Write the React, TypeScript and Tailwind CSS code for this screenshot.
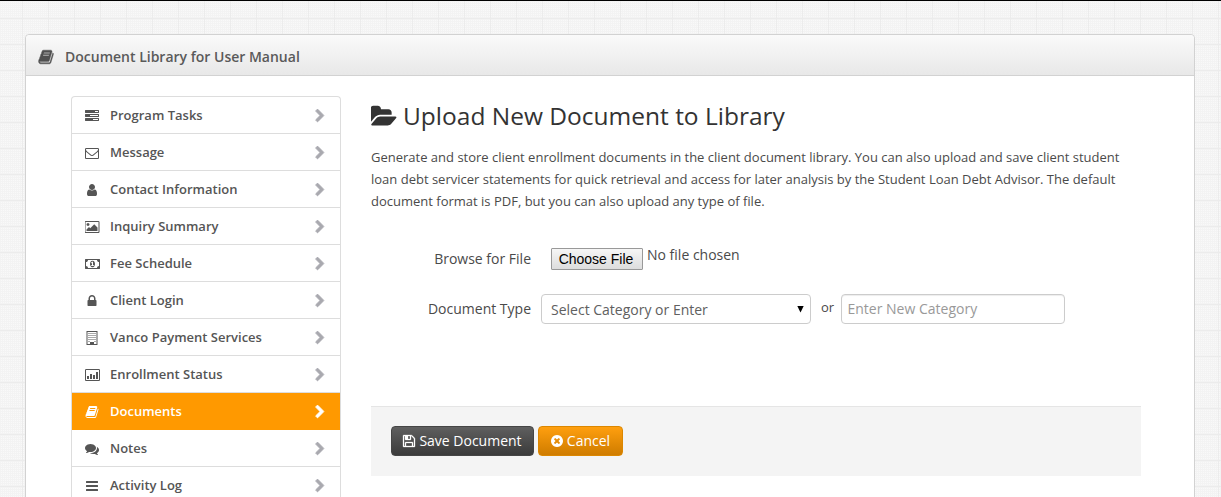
import React from "react";

const icons = {
  tasks: "M1024 1408h640v-128h-640v128zm-384-512h1024v-128h-1024v128zm640-512h384v-128h-384v128zm512 832v256q0 26-19 45t-45 19h-1664q-26 0-45-19t-19-45v-256q0-26 19-45t45-19h1664q26 0 45 19t19 45zm0-512v256q0 26-19 45t-45 19h-1664q-26 0-45-19t-19-45v-256q0-26 19-45t45-19h1664q26 0 45 19t19 45zm0-512v256q0 26-19 45t-45 19h-1664q-26 0-45-19t-19-45v-256q0-26 19-45t45-19h1664q26 0 45 19t19 45z",
  envelope: "M1664 1504v-768q-32 36-69 66-268 206-426 338-51 43-83 67t-86.5 48.5-102.5 24.5h-2q-48 0-102.5-24.5t-86.5-48.5-83-67q-158-132-426-338-37-30-69-66v768q0 13 9.5 22.5t22.5 9.5h1472q13 0 22.5-9.5t9.5-22.5zm0-1051v-24.5l-.5-13-3-12.5-5.5-9-9-7.5-14-2.5h-1472q-13 0-22.5 9.5t-9.5 22.5q0 168 147 284 193 152 401 317 6 5 35 29.5t46 37.5 44.5 31.5 50.5 27.5 43 9h2q20 0 43-9t50.5-27.5 44.5-31.5 46-37.5 35-29.5q208-165 401-317 54-43 100.5-115.5t46.5-131.5zm128-37v1088q0 66-47 113t-113 47h-1472q-66 0-113-47t-47-113v-1088q0-66 47-113t113-47h1472q66 0 113 47t47 113z",
  user: "M1536 1399q0 109-62.5 187t-150.5 78h-854q-88 0-150.5-78t-62.5-187q0-85 8.5-160.5t31.5-152 58.5-131 94-89 134.5-34.5q131 128 313 128t313-128q76 0 134.5 34.5t94 89 58.5 131 31.5 152 8.5 160.5zm-256-887q0 159-112.5 271.5t-271.5 112.5-271.5-112.5-112.5-271.5 112.5-271.5 271.5-112.5 271.5 112.5 112.5 271.5z",
  picture: "M576 576q0 80-56 136t-136 56-136-56-56-136 56-136 136-56 136 56 56 136zm1024 384v448h-1408v-192l320-320 160 160 512-512zm96-704h-1600q-13 0-22.5 9.5t-9.5 22.5v1216q0 13 9.5 22.5t22.5 9.5h1600q13 0 22.5-9.5t9.5-22.5v-1216q0-13-9.5-22.5t-22.5-9.5zm160 32v1216q0 66-47 113t-113 47h-1600q-66 0-113-47t-47-113v-1216q0-66 47-113t113-47h1600q66 0 113 47t47 113z",
  money: "M768 1152h384v-96h-128v-448h-114l-148 137 77 80q42-37 55-57h2v288h-128v96zm512-256q0 70-21 142t-59.5 134-101.5 101-138 39-138-39-101.5-101-59.5-134-21-142 21-142 59.5-134 101.5-101 138-39 138 39 101.5 101 59.5 134 21 142zm512 256v-512q-106 0-181-75t-75-181h-1152q0 106-75 181t-181 75v512q106 0 181 75t75 181h1152q0-106 75-181t181-75zm128-832v1152q0 26-19 45t-45 19h-1792q-26 0-45-19t-19-45v-1152q0-26 19-45t45-19h1792q26 0 45 19t19 45z",
  lock: "M640 768h512v-192q0-106-75-181t-181-75-181 75-75 181v192zm832 96v576q0 40-28 68t-68 28h-960q-40 0-68-28t-28-68v-576q0-40 28-68t68-28h32v-192q0-184 132-316t316-132 316 132 132 316v192h32q40 0 68 28t28 68z",
  building: "M192 0h1408v1792h-1408zM320 128v1536h320v-256h512v256h320v-1536zM448 256h128v128h-128zM704 256h128v128h-128zM960 256h128v128h-128zM1216 256h128v128h-128zM448 512h128v128h-128zM704 512h128v128h-128zM960 512h128v128h-128zM1216 512h128v128h-128zM448 768h128v128h-128zM704 768h128v128h-128zM960 768h128v128h-128zM1216 768h128v128h-128zM448 1024h128v128h-128zM704 1024h128v128h-128zM960 1024h128v128h-128zM1216 1024h128v128h-128zM448 1280h128v128h-128zM1216 1280h128v128h-128z",
  chart: "M160 128h1600q66 0 113 47t47 113v1216q0 66-47 113t-113 47h-1600q-66 0-113-47t-47-113v-1216q0-66 47-113t113-47zM128 256v1280h1664v-1280zM256 1024h256v384h-256zM640 768h256v640h-256zM1024 896h256v512h-256zM1408 512h256v896h-256z",
  book: "M1703 478q40 57 18 129l-275 906q-19 64-76.5 107.5t-122.5 43.5h-923q-77 0-148.5-53.5t-99.5-131.5q-24-67-2-127 0-4 3-27t4-37q1-8-3-21.5t-3-19.5q2-11 8-21t16.5-23.5 16.5-23.5q23-38 45-91.5t30-91.5q3-10 .5-30t-.5-28q3-11 17-28t17-23q21-36 42-92t25-90q1-9-2.5-32t.5-28q4-13 22-30.5t22-22.5q19-26 42.5-84.5t27.5-96.5q1-8-3-25.5t-2-26.5q2-8 9-18t18-23 17-21q8-12 16.5-30.5t15-35 16-36 19.5-32 26.5-23.5 36-11.5 47.5 5.5l-1 3q38-9 51-9h761q74 0 114 56t18 130l-274 906q-36 119-71.5 153.5t-128.5 34.5h-869q-27 0-38 15-11 16-1 43 24 70 144 70h923q29 0 56-15.5t35-41.5l300-987q7-22 5-57 38 15 59 43zm-1064 2q-4 13 2 22.5t20 9.5h608q13 0 25.5-9.5t16.5-22.5l21-64q4-13-2-22.5t-20-9.5h-608q-13 0-25.5 9.5t-16.5 22.5zm-83 256q-4 13 2 22.5t20 9.5h608q13 0 25.5-9.5t16.5-22.5l21-64q4-13-2-22.5t-20-9.5h-608q-13 0-25.5 9.5t-16.5 22.5z",
  comments: "M1408 768q0 139-94 257t-256.5 186.5-353.5 68.5q-86 0-176-16-124 88-278 128-36 9-86 16h-3q-11 0-20.5-8t-11.5-21q-1-3-1-6.5t.5-6.5 2-6l2.5-5 3.5-5.5 4-5 4.5-5 4-4.5q5-6 23-25t26-29.5 22.5-29 25-38.5 20.5-44q-124-72-195-177t-71-224q0-139 94-257t256.5-186.5 353.5-68.5 353.5 68.5 256.5 186.5 94 257zm384 256q0 120-71 224.5t-195 176.5q10 24 20.5 44t25 38.5 22.5 29 26 29.5 23 25q1 1 4 4.5t4.5 5 4 5 3.5 5.5l2.5 5 2 6 .5 6.5-1 6.5q-3 14-13 22t-22 7q-50-7-86-16-154-40-278-128-90 16-176 16-271 0-472-132 58 4 88 4 161 0 309-45t264-129q125-92 192-212t67-254q0-77-23-152 129 71 204 178t75 230z",
  bars: "M192 256h1408q64 0 64 64v128q0 64-64 64h-1408q-64 0-64-64v-128q0-64 64-64zM192 768h1408q64 0 64 64v128q0 64-64 64h-1408q-64 0-64-64v-128q0-64 64-64zM192 1280h1408q64 0 64 64v128q0 64-64 64h-1408q-64 0-64-64v-128q0-64 64-64z",
  folder: "M1815 952q0 31-31 66l-336 396q-43 51-120.5 86.5t-143.5 35.5h-1088q-34 0-60.5-13t-26.5-43q0-31 31-66l336-396q43-51 120.5-86.5t143.5-35.5h1088q34 0 60.5 13t26.5 43zm-343-344v160h-832q-94 0-197 47.5t-164 119.5l-337 396-5 6q0-4-.5-12.5t-.5-12.5v-960q0-92 66-158t158-66h320q92 0 158 66t66 158v32h544q92 0 158 66t66 158z",
  floppy: "M512 1536h768v-384h-768v384zm896 0h128v-896q0-14-10-38.5t-20-34.5l-281-281q-10-10-34-20t-39-10v416q0 40-28 68t-68 28h-576q-40 0-68-28t-28-68v-416h-128v1280h128v-416q0-40 28-68t68-28h832q40 0 68 28t28 68v416zm-384-928v-320q0-13-9.5-22.5t-22.5-9.5h-192q-13 0-22.5 9.5t-9.5 22.5v320q0 13 9.5 22.5t22.5 9.5h192q13 0 22.5-9.5t9.5-22.5zm640 32v928q0 40-28 68t-68 28h-1344q-40 0-68-28t-28-68v-1344q0-40 28-68t68-28h928q40 0 88 20t76 48l280 280q28 28 48 76t20 88z",
  cancel: "M1277 1122q0-26-19-45l-181-181 181-181q19-19 19-45 0-27-19-46l-90-90q-19-19-46-19-26 0-45 19l-181 181-181-181q-19-19-45-19-27 0-46 19l-90 90q-19 19-19 46 0 26 19 45l181 181-181 181q-19 19-19 45 0 27 19 46l90 90q19 19 46 19 26 0 45-19l181-181 181 181q19 19 45 19 27 0 46-19l90-90q19-19 19-46zm387-226q0 209-103 385.5t-279.5 279.5-385.5 103-385.5-103-279.5-279.5-103-385.5 103-385.5 279.5-279.5 385.5-103 385.5 103 279.5 279.5 103 385.5z",
  chevron: "M1363 877l-742 742q-19 19-45 19t-45-19l-166-166q-19-19-19-45t19-45l531-531-531-531q-19-19-19-45t19-45l166-166q19-19 45-19t45 19l742 742q19 19 19 45t-19 45z",
};

type IconName = keyof typeof icons;

function Icon({ name, className, width = 1792 }: { name: IconName; className: string; width?: number }) {
  return (
    <svg viewBox={`0 0 ${width} 1792`} className={`shrink-0 ${className}`} fill="currentColor" fillRule="evenodd" aria-hidden="true">
      <path d={icons[name]} />
    </svg>
  );
}

const menu: { label: string; icon: IconName; wide?: boolean; active?: boolean }[] = [
  { label: "Program Tasks", icon: "tasks" },
  { label: "Message", icon: "envelope" },
  { label: "Contact Information", icon: "user" },
  { label: "Inquiry Summary", icon: "picture", wide: true },
  { label: "Fee Schedule", icon: "money", wide: true },
  { label: "Client Login", icon: "lock" },
  { label: "Vanco Payment Services", icon: "building" },
  { label: "Enrollment Status", icon: "chart", wide: true },
  { label: "Documents", icon: "book", active: true },
  { label: "Notes", icon: "comments" },
  { label: "Activity Log", icon: "bars" },
];

function SideMenu() {
  return (
    <nav className="w-[270px] shrink-0 rounded-t border-x border-t border-[#dddddd]">
      {menu.map((m) => (
        <a
          key={m.label}
          className={`flex h-[37px] items-center border-b pl-3 pr-[13px] pt-px text-[13px] font-semibold ${
            m.active ? "border-[#ff9900] bg-[#ff9900] text-white" : "border-[#dddddd] text-[#555555]"
          }`}
        >
          <span className="flex w-4 justify-center">
            <Icon name={m.icon} width={m.wide ? 1920 : 1792} className={m.wide ? "h-[14px] w-[15px]" : "h-[14px] w-[14px]"} />
          </span>
          <span className="ml-[10px] flex-1 pt-px">{m.label}</span>
          <Icon
            name="chevron"
            className={`h-[14px] w-[14px] stroke-current stroke-[100] ${m.active ? "text-white" : "text-[#a9a9af]"}`}
          />
        </a>
      ))}
    </nav>
  );
}

export default function App() {
  return (
    <div className="h-[497px] overflow-hidden border-t border-black bg-[#f9f9f9] bg-[linear-gradient(90deg,#ececec_1px,transparent_1px),linear-gradient(#ececec_1px,transparent_1px),linear-gradient(90deg,#f3f3f3_1px,transparent_1px),linear-gradient(#f3f3f3_1px,transparent_1px)] bg-[size:26px_26px,26px_26px,2px_2px,2px_2px] bg-[position:22px_0,0_17px,0_0,0_0] pl-[25px] pt-[33px] font-['Open_Sans',sans-serif] text-[#4a4a4a]">
      <div className="h-[520px] w-[1170px] rounded-t border border-[#d2d2d2] bg-white">
        <header className="flex h-[41px] items-center rounded-t border-b border-[#d2d2d2] bg-linear-to-b from-[#fafafa] to-[#e8e8e8] pl-3 pt-[3px] text-sm font-semibold text-[#5a5a5a]">
          <Icon name="book" className="h-4 w-4 stroke-current stroke-[50] text-[#505050]" />
          <h1 className="ml-[11px]">Document Library for User Manual</h1>
        </header>
        <div className="flex pl-[45px] pt-5">
          <SideMenu />
          <main className="ml-[30px] w-[770px]">
            <h2 className="flex h-10 items-center whitespace-nowrap text-[24.5px] text-[#333333]">
              <Icon name="folder" width={1920} className="mr-[5px] h-[25px] w-[27px]" />
              <span>Upload New Document to Library</span>
            </h2>
            <p className="mt-[10px] whitespace-nowrap text-[13px] leading-[22px]">
              Generate and store client enrollment documents in the client document library. You can also upload and save client student
              <br />
              loan debt servicer statements for quick retrieval and access for later analysis by the Student Loan Debt Advisor. The default
              <br />
              document format is PDF, but you can also upload any type of file.
            </p>
            <form className="mt-[35px] text-sm">
              <div className="flex h-[30px] items-start">
                <label className="w-40 pt-[2px] text-right">Browse for File</label>
                <button type="button" className="ml-5 mt-px h-[22px] w-[92px] rounded-[1px] border border-[#999999] bg-linear-to-b from-[#f6f6f6] to-[#dddddd] pr-0.5 font-['Liberation_Sans',sans-serif] text-sm leading-5 text-black">
                  Choose File
                </button>
                <span className="-mt-[2px] ml-1">No file chosen</span>
              </div>
              <div className="mt-[17px] flex h-[30px] items-center">
                <label className="w-40 text-right">Document Type</label>
                <div className="ml-[10px] flex h-[30px] w-[270px] items-center justify-between rounded border border-[#cccccc] pl-[9px] pr-[6px] text-[#606060]">
                  <span className="pt-px">Select Category or Enter</span>
                  <svg viewBox="0 0 7 7" className="h-[7px] w-[7px]" aria-hidden="true"><path d="M0.3 0h6.4L3.5 6.5z" /></svg>
                </div>
                <span className="-mt-1 ml-[10px] w-5 text-[13px]">or</span>
                <input
                  placeholder="Enter New Category"
                  className="h-[30px] w-[224px] rounded border border-[#cccccc] px-[5.5px] pb-px shadow-[inset_0_1px_1px_rgba(0,0,0,0.075)] placeholder:text-[#999999]"
                />
              </div>
              <div className="mt-[82px] flex h-[70px] gap-1 border-t border-[#e5e5e5] bg-[#f4f4f4] pl-5 pt-[19px] text-white">
                <button type="button" className="flex h-[30px] w-[143px] items-center justify-center gap-[3px] rounded border border-[#454545] bg-linear-to-b from-[#5f5f5f] to-[#3b3b3b] pr-px">
                  <Icon name="floppy" className="h-[14px] w-[14px] stroke-current stroke-[40]" />
                  Save Document
                </button>
                <button type="button" className="flex h-[30px] w-[85px] items-center justify-center gap-[3px] rounded border border-[#dc8700] bg-linear-to-b from-[#ff9f0f] to-[#cf7c00] pr-px">
                  <Icon name="cancel" className="h-[14px] w-[14px]" />
                  Cancel
                </button>
              </div>
            </form>
          </main>
        </div>
      </div>
    </div>
  );
}
